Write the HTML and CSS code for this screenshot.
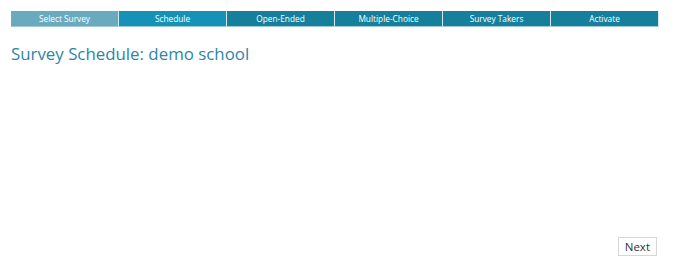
FILE: index.html
```html
<!DOCTYPE html>
<html>
<head>
<meta charset="utf-8">
<link rel="stylesheet" href="styles.css">
</head>
<body>
<div class="page">
  <nav class="steps">
    <div class="step done">Select Survey</div>
    <div class="step current">Schedule</div>
    <div class="step">Open-Ended</div>
    <div class="step">Multiple-Choice</div>
    <div class="step">Survey Takers</div>
    <div class="step">Activate</div>
  </nav>
  <h1 class="title">Survey Schedule: demo school</h1>
  <div class="spacer"></div>
  <div class="actions">
    <button class="btn">Next</button>
  </div>
</div>
</body>
</html>
```
FILE: styles.css
```css
html, body {
  margin: 0;
  padding: 0;
  background: #fff;
  font-family: "Open Sans", "Noto Sans", sans-serif;
}
.page {
  width: 682px;
  height: 277px;
  box-sizing: border-box;
  padding: 11px 25px 21px 11px;
  display: flex;
  flex-direction: column;
}
.steps {
  display: flex;
  width: 648px;
}
.step {
  width: 108px;
  height: 16px;
  box-sizing: border-box;
  background: #157f9c;
  border-right: 1px solid #d5e8ee;
  border-bottom: 1px solid #9fcad8;
  color: #fff;
  font-size: 8.3px;
  line-height: 15px;
  text-align: center;
}
.step.done {
  background: #6aaabf;
}
.step.current {
  background: #1592b8;
}
.title {
  margin: 16px 0 0;
  font-weight: 400;
  font-size: 16.85px;
  line-height: 22px;
  color: #2b86a6;
}
.spacer {
  flex: 1;
}
.actions {
  display: flex;
  justify-content: flex-end;
}
.btn {
  font-family: "Open Sans", "Noto Sans", sans-serif;
  font-size: 11.5px;
  color: #333;
  background: #fff;
  border: 1px solid #d6d6d6;
  border-radius: 0;
  padding: 0 6px;
  height: 19px;
  line-height: 17px;
}
```
